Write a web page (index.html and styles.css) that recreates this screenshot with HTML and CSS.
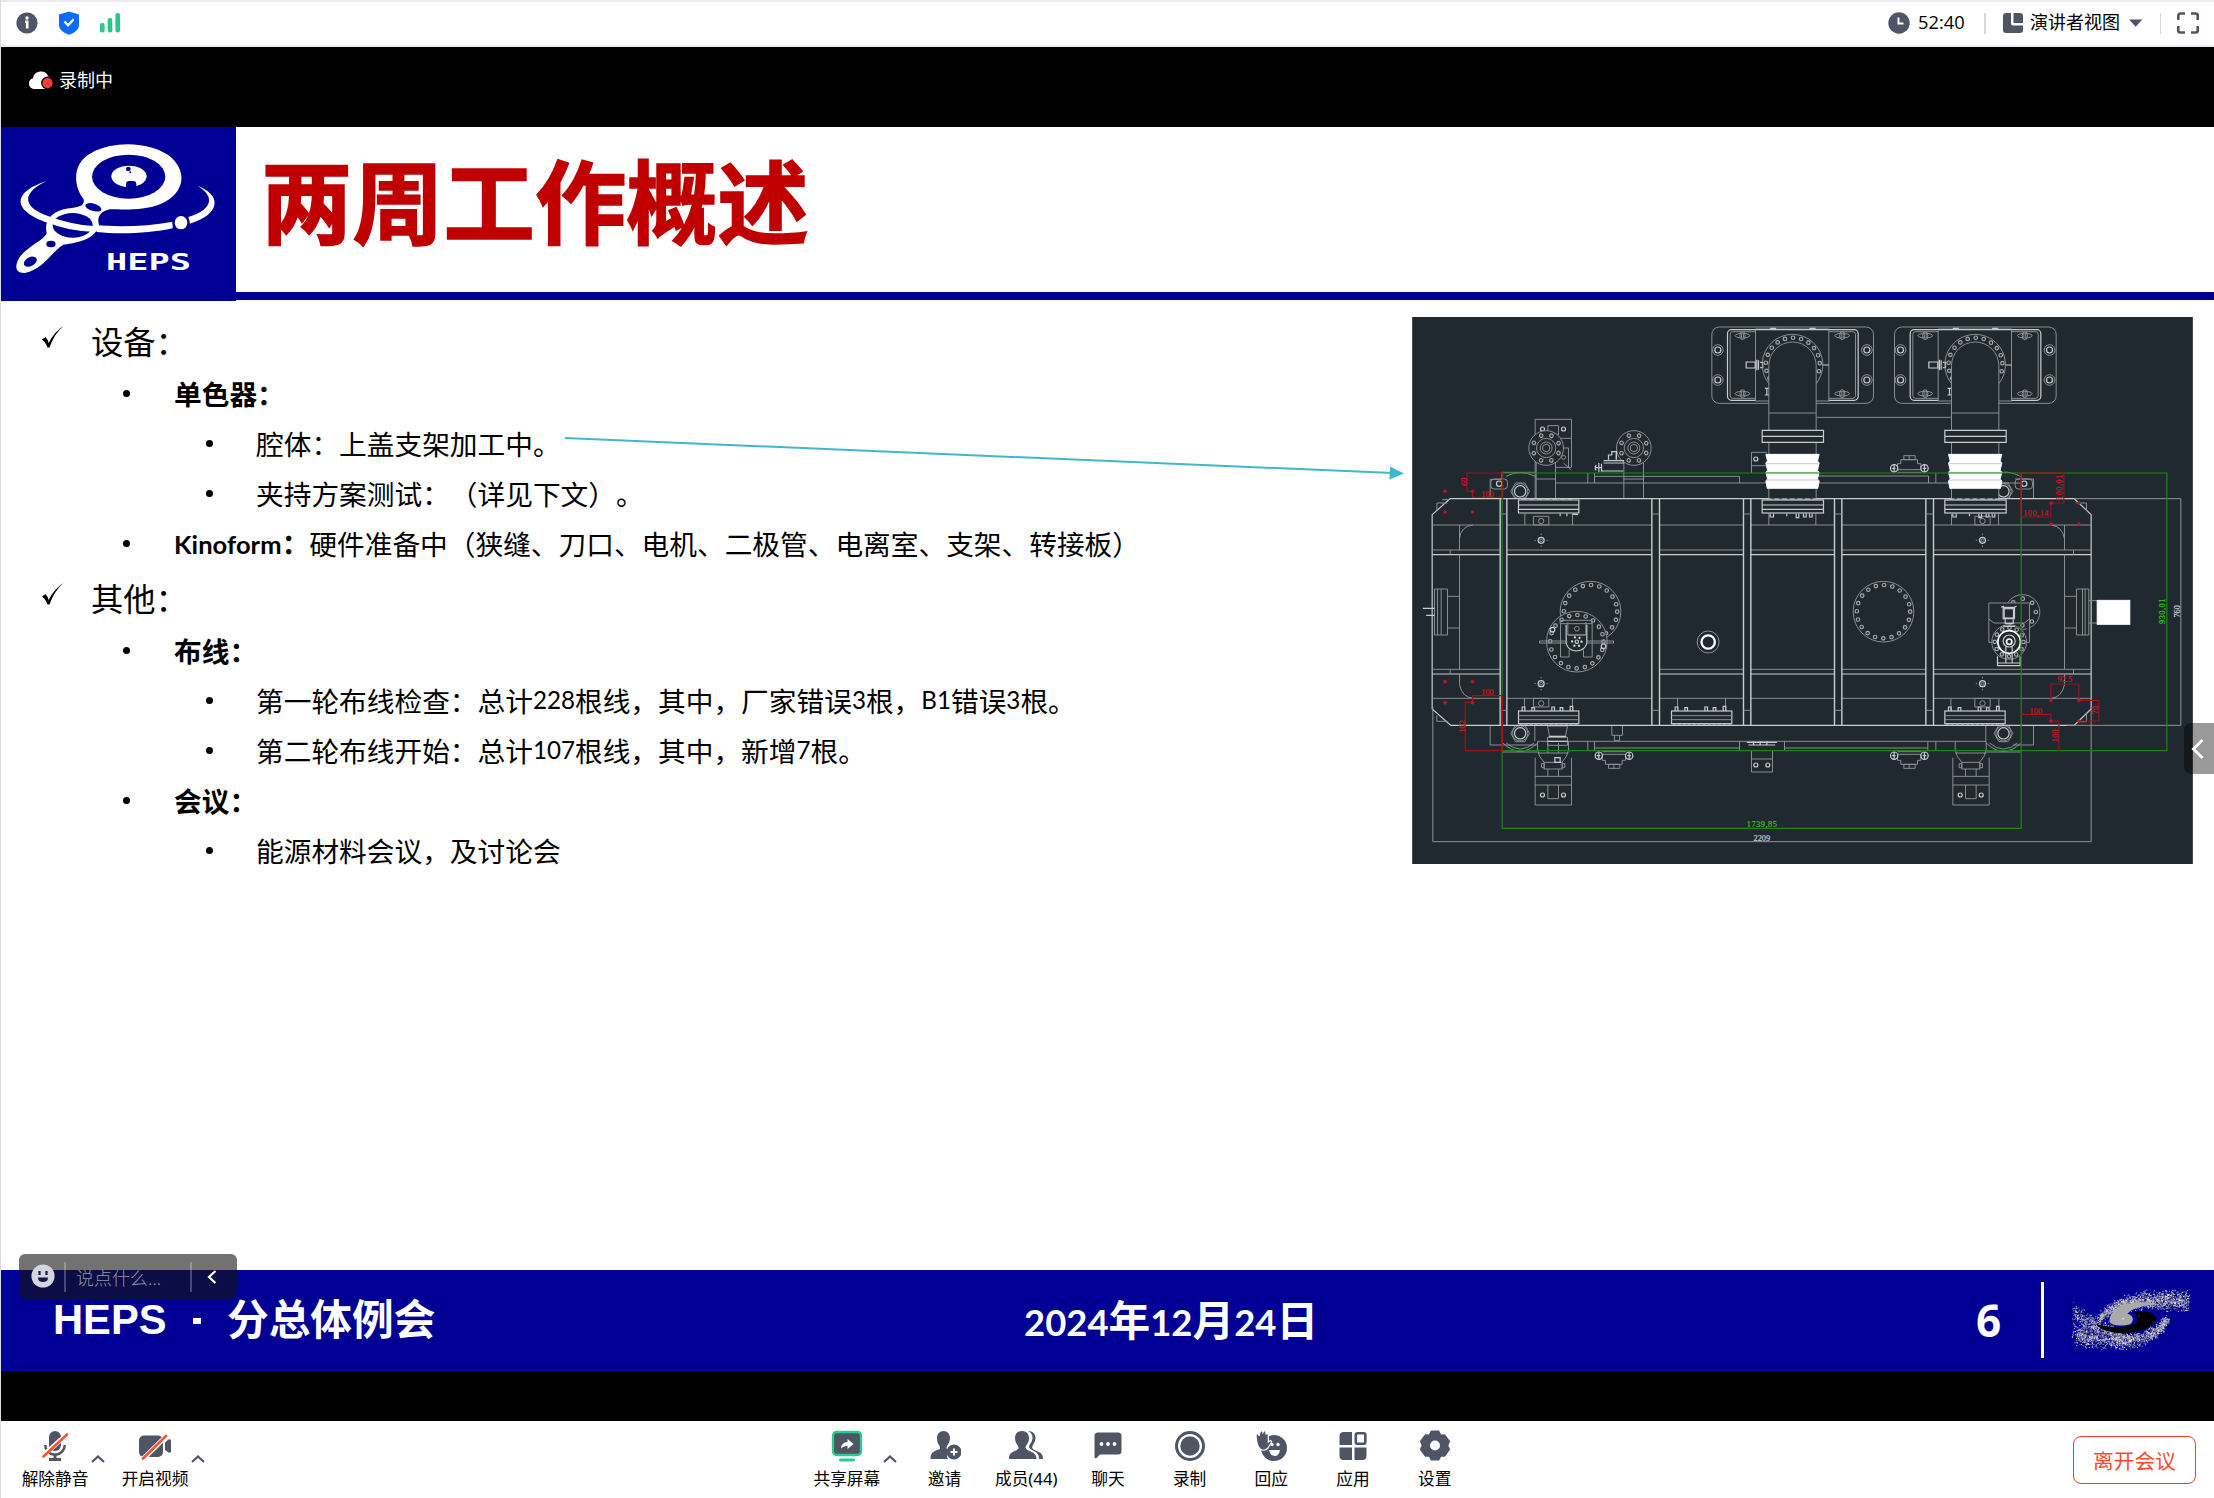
FILE: index.html
```html
<!DOCTYPE html>
<html lang="zh-CN">
<head>
<meta charset="utf-8">
<title>会议</title>
<link rel="stylesheet" href="styles.css">
</head>
<body>
<div class="window">
  <header class="topbar">
    <div class="status">
      <svg class="ico-info" viewBox="0 0 22 22"><circle cx="11" cy="11" r="10.6" fill="#4f5565"/><circle cx="11" cy="6" r="1.700" fill="#fff"/><path d="M9 9.800h2.200v6.600" fill="none" stroke="#fff" stroke-width="2.600"/></svg>
      <svg class="ico-shield" viewBox="0 0 22 24"><path d="M11 .6 21 3.4V14c0 5-5 8-10 9.700C6 22 1 19 1 14V3.400z" fill="#0a6cff"/><path d="m6.500 10.500 3.600 3.800 5.600-6" fill="none" stroke="#fff" stroke-width="2.300"/></svg>
      <svg class="ico-signal" viewBox="0 0 20 20"><g fill="#26c98a"><rect x="0" y="10" width="4.600" height="9.500" rx="2"/><rect x="7.700" y="5" width="4.600" height="14.500" rx="2"/><rect x="15.400" y="0" width="4.600" height="19.500" rx="2"/></g></svg>
    </div>
    <div class="view">
      <svg class="ico-clock" viewBox="0 0 22 22"><circle cx="11" cy="11" r="10.700" fill="#4f5565"/><path d="M10.500 5.600v6h5" fill="none" stroke="#fff" stroke-width="2"/></svg>
      <span class="timer">52:40</span>
      <i class="rule rule-a"></i>
      <svg class="ico-layout" viewBox="0 0 20 20"><path d="M3 0h5v10.500a2 2 0 0 0 2 2h10V17a3 3 0 0 1-3 3H3a3 3 0 0 1-3-3V3a3 3 0 0 1 3-3zM10.500 0H17a3 3 0 0 1 3 3v7h-9.500z" fill="#4f5565"/></svg>
      <span class="viewname">演讲者视图</span>
      <svg class="ico-tri" viewBox="0 0 14 8"><path d="M0 .5h13.400L6.700 7.700z" fill="#4f5565"/></svg>
      <i class="rule rule-b"></i>
      <svg class="ico-full" viewBox="0 0 22 22"><path d="M1.300 8V3.500a2 2 0 0 1 2-2H8M14 1.500h4.700a2 2 0 0 1 2 2V8M20.700 14v4.500a2 2 0 0 1-2 2H14M8 20.500H3.300a2 2 0 0 1-2-2V14" fill="none" stroke="#4f5565" stroke-width="2.600"/></svg>
    </div>
  </header>

  <div class="recbar">
    <svg class="ico-cloud" viewBox="0 0 26 20"><path d="M5.500 19A5.500 5.500 0 0 1 5 8.300 8 8 0 0 1 20.300 6.500 6.500 6.500 0 0 1 25 13l-7 6z" fill="#fff"/><circle cx="19.500" cy="13" r="6.400" fill="#000"/><circle cx="19.500" cy="13.200" r="5.100" fill="#ff3b30"/></svg>
    <span>录制中</span>
  </div>

  <main class="slide">
    <div class="slide-head">
      <svg class="heps" viewBox="3 3 705 522">
        <g fill="#fff">
          <path d="M140 165C20 205 50 262 152 293L160 275C72 250 55 205 140 165z"/>
          <path d="M285 297C350 303 440 302 518 287V307C450 322 360 326 290 318z"/>
          <path d="M592 179C645 210 640 250 565 273L569 293C668 262 662 205 592 179z"/>
        </g>
        <path d="M250 218C220 180 215 110 275 80C350 40 460 50 515 95C565 145 550 205 480 235C430 255 370 250 330 250C300 256 290 275 297 296C290 335 240 350 190 356C160 372 130 430 75 441C40 443 42 410 70 380C105 350 138 335 140 320C130 280 165 250 210 247C245 243 256 235 250 218z" fill="#fff"/>
        <ellipse cx="386" cy="152" rx="110" ry="66" fill="#000094"/>
        <ellipse cx="387" cy="151" rx="53" ry="32" fill="#fff"/>
        <circle cx="385" cy="129" r="7" fill="#000094"/><circle cx="391" cy="139" r="3" fill="#000094"/><path d="M378 183v-10q0-7 8-8h15q8 1 8 8v10z" fill="#000094"/>
        <ellipse cx="218" cy="298" rx="60" ry="37" fill="#000094"/>
        <path d="M150 272q66 24 130 28l5 18q-85-4-140-28z" fill="#fff"/>
        <ellipse cx="280" cy="244" rx="25" ry="11" transform="rotate(16 280 244)" fill="#000094"/>
        <ellipse cx="153" cy="354" rx="14" ry="10" fill="#000094"/>
        <ellipse cx="91" cy="407" rx="21" ry="13" transform="rotate(-28 91 407)" fill="#000094"/>
        <ellipse cx="543" cy="290" rx="26" ry="24" fill="#000094"/><ellipse cx="543" cy="290" rx="19" ry="20" fill="#fff"/>
        <text x="318" y="431" class="heps-word" textLength="255" lengthAdjust="spacingAndGlyphs">HEPS</text>
      </svg>
      <div class="titlebox"><h1>两周工作概述</h1></div>
    </div>

    <div class="slide-body">
      <ul class="outline">
        <li class="l1"><svg class="check" viewBox="0 0 24 24"><path d="M1 14.500 4.500 12q2 2 3.200 6Q13 7 22.500 1q-9.500 8-14 21.500H6.500Q4.500 17 1 14.500z"/></svg>设备：</li>
        <li class="l2"><b>单色器：</b></li>
        <li class="l3">腔体：上盖支架加工中。</li>
        <li class="l3">夹持方案测试：（详见下文）。</li>
        <li class="l2"><b><span class="lat kin">Kinoform</span>：</b>硬件准备中（狭缝、刀口、电机、二极管、电离室、支架、转接板）</li>
        <li class="l1"><svg class="check" viewBox="0 0 24 24"><path d="M1 14.500 4.500 12q2 2 3.200 6Q13 7 22.500 1q-9.500 8-14 21.500H6.500Q4.500 17 1 14.500z"/></svg>其他：</li>
        <li class="l2"><b>布线：</b></li>
        <li class="l3">第一轮布线检查：总计<span class="lat">228</span>根线，其中，厂家错误<span class="lat">3</span>根，<span class="lat">B1</span>错误<span class="lat">3</span>根。</li>
        <li class="l3">第二轮布线开始：总计<span class="lat">107</span>根线，其中，新增<span class="lat">7</span>根。</li>
        <li class="l2"><b>会议：</b></li>
        <li class="l3">能源材料会议，及讨论会</li>
      </ul>

      <svg class="cad" viewBox="36 22 2342 1641">
        <defs>
          <g id="bolt"><circle r="16"/><circle r="9" class="hi"/></g>
          <g id="oval"><ellipse rx="22" ry="7"/><ellipse rx="8" ry="12"/><path d="M-3-6v12M3-6v12"/></g>
          <g id="target"><circle r="9" class="hi"/><circle r="4"/><path d="M-20 0h4M16 0h4M0-20v4M0 16v4"/></g>
          <g id="bolts20"><circle r="80" pathLength="20" class="dots"/><circle r="80" pathLength="20" class="holes"/></g>
          <g id="tower">
            <rect x="935" y="52" width="485" height="229" rx="22"/>
            <rect x="982" y="60" width="392" height="212" rx="12" class="hi"/><rect x="990" y="66" width="376" height="200" rx="8"/>
            <rect x="1066" y="58" width="220" height="216" class="solid"/>
            <path d="M1110 56h18M1228 56h18M1066 60h220" class="hi"/>
            <use href="#bolt" x="953" y="121"/><use href="#bolt" x="953" y="211"/><use href="#bolt" x="1400" y="121"/><use href="#bolt" x="1400" y="211"/>
            <use href="#oval" x="1027" y="78"/><use href="#oval" x="1027" y="252"/><use href="#oval" x="1326" y="78"/><use href="#oval" x="1326" y="252"/>
            <path d="M1038 157h27v18h-27zM1070 150v32M1075 152v28M1080 158h8v16h-8M1268 166h18M1094 236h12M1100 236v20M1094 256h12" class="hi"/>
            <path d="M1106 222A91 91 0 1 1 1248 222"/>
            <g transform="translate(1178 166)"><path d="M-70 40A81 81 0 1 1 70 40" pathLength="14" class="dots"/><path d="M-70 40A81 81 0 1 1 70 40" pathLength="14" class="holes"/></g>
            <path d="M1106 567V168A71 71 0 0 1 1248 168V567" class="solid"/>
            <path d="M1106 310h142"/>
            <path d="M1086 362h184v36h-184zM1086 380h184" class="solid hi"/>
            <path d="M1097 434h160l-5 20 5 6-5 22 5 6-5 20 5 6-4 22h-152l-4-22 5-6-5-20 5-6-5-22 5-6z" fill="#fff" stroke="#fff"/>
            <path d="M1100 462h154M1100 488h154M1100 511h154" stroke="#a9adb0" stroke-width="2"/>
            <rect x="1086" y="571" width="184" height="39" class="solid hi"/>
            <path d="M1086 586h184M1086 599h184M1110 612v10h10v-10M1160 612v8M1188 612v12h8v-12M1210 612v10h8v-10M1228 612v10h8v-10" class="hi"/>
            <path d="M1100 568h156" class="hi" stroke-width="6" stroke-dasharray="14 9"/>
          </g>
          <g id="foot">
            <path d="M405 1344v142h109v-142M405 1400h109M405 1426h109M443 1426v41h32v-41M443 1378v22M475 1378v22"/>
            <circle cx="427" cy="1456" r="6" class="hi"/><circle cx="490" cy="1456" r="6" class="hi"/>
            <rect x="432" y="1358" width="54" height="20"/><path d="M424 1362h8v12h-8zM486 1362h8v12h-8zM412 1295v26q3 20 20 37M505 1295v26q-3 20-20 37M412 1330h93"/>
          </g>
          <g id="elbow"><path d="M443 1300v30M475 1300v30M442 1249h60l-6 30h-48zM442 1283h60v24h-60zM404 1247v48"/><path d="M464 1344h16v14h-16zM446 1281h52M442 1295h60" class="hi"/></g>
          <g id="valve"><path d="M606 1334h70v18h-10v12h-50v-12h-10zM625 1364h34v12h-34zM641 1364v12M606 1326h72" /><circle cx="596" cy="1338" r="11" class="hi"/><circle cx="687" cy="1338" r="11" class="hi"/><path d="M596 1328v20M687 1328v20M600 1338h-10M682 1338h10" class="hi"/></g>
          <g id="nut"><path d="M332 545l14-25h28l14 25-14 25h-28z"/><circle cx="360" cy="545" r="23"/><circle cx="360" cy="545" r="17" class="hi"/></g>
          <g id="flange"><rect x="355" y="1204" width="181" height="38" class="hi"/><path d="M355 1218h181M355 1230h181M373 1166v38M517 1166v38" /><path d="M366 1204v-12h8v12M395 1204v-10h8v10M455 1204v-12h8v12M480 1204v-10h8v10M510 1204v-14h8v14" class="hi"/><path d="M358 1246h176" class="hi" stroke-width="5" stroke-dasharray="10 5"/></g>
        </defs>
        <rect x="36" y="22" width="2342" height="1641" fill="#212930" stroke="none"/>
        <g class="ln">
          <!-- support rails above and below the chamber -->
          <path d="M583 500h435V520M583 490v30M563 490v30M1248 499h337v21M1607 490v30M466 520h1394M1248 323h406M1585 499v21"/>
          <path d="M270 1306V1247M270 1306h140M412 1295h1346M583 1315h435M1153 1315h430M563 1295v28M583 1295v28M1018 1295v28M1153 1295v28M1583 1295v28M1607 1295v28M1757 1247v48M1900 1247v59h-60"/>
          <!-- brackets -->
          <path d="M405 567V329h109v144h-48M443 364v-16h32v30M475 386h39M475 415h30v58M490 460l22 20"/>
          <circle cx="427" cy="358" r="6" class="hi"/><circle cx="490" cy="358" r="6" class="hi"/><circle cx="490" cy="443" r="6"/>
          <path d="M408 456v111M466 456v111M408 508h58M671 456v111M730 456v111M671 508h59M583 500v18"/>
          <g class="solid"><circle cx="438" cy="415" r="52"/><circle cx="701" cy="415" r="52"/></g>
          <g><circle cx="438" cy="415" r="29"/><circle cx="438" cy="415" r="18"/><circle cx="438" cy="415" r="11"/><circle cx="701" cy="415" r="29"/><circle cx="701" cy="415" r="18"/><circle cx="701" cy="415" r="11"/></g>
          <g transform="rotate(22 438 415)"><circle cx="438" cy="415" r="40" pathLength="8" class="dots"/><circle cx="438" cy="415" r="40" pathLength="8" class="holes"/></g>
          <g transform="rotate(22 701 415)"><circle cx="701" cy="415" r="40" pathLength="8" class="dots"/><circle cx="701" cy="415" r="40" pathLength="8" class="holes"/></g>
          <path d="M610 453h62M610 460h62M605 484h64M625 450v-14h10v-10h14v24M648 430v20" class="hi"/><path d="M596 460v28M588 466q-6 8 0 16M604 462v24M586 474h20" class="hi" stroke-width="5"/>
          <path d="M270 567v-58h36M305 509V488h102M318 500q40-22 88 0"/><rect x="272" y="508" width="50" height="30" rx="10"/><circle cx="297" cy="522" r="8" class="hi"/>
          <use href="#nut"/>
          <path d="M1054 490v-62h46M1054 468h46"/><circle cx="1067" cy="448" r="6" class="hi"/>
          <path d="M1804 488q30-4 60 14M1845 508h55v59"/><rect x="1845" y="508" width="52" height="30" rx="10"/><circle cx="1872" cy="522" r="8" class="hi"/>
          <use href="#nut" x="1450"/>
          <g transform="translate(886 1814) scale(1 -1)"><use href="#valve"/></g>
          <use href="#valve"/><use href="#valve" x="886"/>
          <path d="M1054 1323v64h63v-64M1054 1348h63M635 1247v30h32v-30M643 1277v16h15v-16"/><path d="M1040 1298h90M1045 1306h80M1060 1295v12M1080 1295v12M1100 1295v12" class="hi"/>
          <circle cx="1067" cy="1366" r="6" class="hi"/><circle cx="1103" cy="1366" r="6" class="hi"/>
          <use href="#foot"/><use href="#foot" x="1253"/><use href="#elbow"/>
          <use href="#nut" y="726"/><use href="#nut" x="1450" y="726"/>
          <path d="M308 1300q52 50 104 0M308 1327h104M318 1300q42 36 84 0M1758 1300q52 50 104 0M1758 1327h104M1768 1300q42 36 84 0"/>
          <!-- chamber body -->
          <path d="M150 567H2022L2073 615V1198L2022 1247H152L96 1198V615z" class="solid hi"/>
          <path d="M96 646H300M320 646H755M778 646h252M1052 646h251M1325 646h252M1600 646h473M96 721H300M320 721H755M778 721h252M1052 721h251M1325 721h252M1600 721h473"/>
          <path d="M96 735H300M320 735H755M778 735h252M1052 735h251M1325 735h252M1600 735h473M96 1093H300M778 1093h252M1052 1093h251M1325 1093h252M1600 1093h473" class="hi"/>
          <path d="M96 1079H300M778 1079h252M1052 1079h251M1325 1079h252M1600 1079h473M96 1166H300M320 1166H755M778 1166h252M1052 1166h251M1325 1166h252M1600 1166h473"/>
          <path d="M300 567v680M320 567v680M755 567v680M778 567v680M1030 567v680M1052 567v680M1303 567v680M1325 567v680M1577 567v680M1600 567v680" class="hi thick"/>
          <path d="M300 613h20M755 613h23M1030 613h22M1303 613h22M1577 613h23M300 1202h20M755 1202h23M1030 1202h22M1303 1202h22M1577 1202h23"/>
          <path d="M178 646v75M178 735v344M178 1093v32q8 38 40 41M178 685q6-36 40-39M150 721v14M150 1079v14M1993 646v75M1993 735v344M1993 1093v32q-8 38-40 41M1993 688q-6-38-40-42M2020 721v14M2020 1079v14"/>
          <path d="M110 603v-23h30M126 570h18M110 1217v18h32M2059 603v-23h-30M2059 1212v24h-28"/>
          <!-- side ports -->
          <path d="M103 838h39v138h-39zM112 838v138M123 838v138M142 860h36M142 955h36" class="solid"/><path d="M68 896h35M78 917h25" class="hi"/>
          <path d="M2029 838h37v138h-37zM2047 838v138M2055 838v138M1993 860h36M1993 955h36M2066 873h25M2066 940h25"/>
          <rect x="2091" y="872" width="98" height="72" fill="#fff" stroke="#fff"/>
          <!-- flanges -->
          <path d="M355 571h181v39h-181zM355 586h181M355 599h181M480 612v8M500 612v8M515 614h18" class="hi"/><path d="M365 568h150" class="hi" stroke-width="6" stroke-dasharray="14 9"/>
          <path d="M374 612v34M517 612v34M400 620h46v26h-46z"/><circle cx="423" cy="634" r="8"/>
          <path d="M1106 612v34M1247 612v34M1654 612v34M1795 612v34M1724 620h46v26h-46z"/><circle cx="1747" cy="634" r="8"/>
          <use href="#flange"/><use href="#flange" x="459"/><use href="#flange" x="1279"/>
          <path d="M400 1166h46v26h-46zM1724 1166h46v26h-46z"/><circle cx="423" cy="1181" r="8"/><circle cx="1747" cy="1181" r="8"/>
          <use href="#target" x="423" y="692"/><use href="#target" x="1747" y="692"/><use href="#target" x="423" y="1122"/><use href="#target" x="1747" y="1122"/>
          <!-- round ports -->
          <circle cx="571" cy="906" r="91"/><use href="#bolts20" x="571" y="906"/>
          <circle cx="530" cy="996" r="91" class="solid"/><use href="#bolts20" x="530" y="996"/>
          <path d="M480 932h96v10h-96zM481 942v100h26v-22M576 942v100h-26v-22M503 938v38h54v-38M503 976h54" /><path d="M498 945v55q4 22 30 24q28-2 32-24v-55" class="hi"/>
          <circle cx="530" cy="957" r="7"/><circle cx="530" cy="996" r="5" class="hi"/><circle cx="530" cy="996" r="14" pathLength="6" class="spots"/><path d="M418 994h82v6h-82zM560 994h80v6h-80z"/><circle cx="610" cy="1010" r="7" class="hi"/><circle cx="457" cy="960" r="7" class="hi"/>
          <circle cx="1450" cy="906" r="91"/><use href="#bolts20" x="1450" y="906"/>
          <circle cx="924" cy="997" r="33"/><circle cx="924" cy="997" r="20" class="ring"/>
          <circle cx="1867" cy="907" r="52"/><circle cx="1867" cy="907" r="40" pathLength="8" class="dots"/><circle cx="1867" cy="907" r="40" pathLength="8" class="holes"/>
          <path d="M1766 880h122v48l-16 12h-90l-16-12zM1766 928v70h20M1888 928v70h-20" class="solid"/>
          <path d="M1809 893h34v34h-34zM1803 893l8-4M1843 893l6-4M1815 927v14h24v-14" class="hi"/><rect x="1812" y="897" width="28" height="28" class="hi"/>
          <circle cx="1827" cy="997" r="52" class="solid"/><circle cx="1827" cy="997" r="43" pathLength="12" class="dots"/><circle cx="1827" cy="997" r="43" pathLength="12" class="holes"/><circle cx="1827" cy="997" r="34" class="ring thin"/><circle cx="1827" cy="994" r="18" class="hi"/><circle cx="1827" cy="996" r="8" class="ring thin"/>
          <path d="M1817 1010v50M1836 1010v50M1792 1040v28h68v-28M1792 1060h68M1809 950h36" class="hi"/>
        </g>
        <g class="dim"><path d="M2022 567h320v680H2000M98 1190v406h1975v-406"/></g>
        <use href="#tower"/><use href="#tower" x="548"/>
        <g class="green"><path d="M306 490V1556H1863V490M306 490H2300V1323H306"/></g>
        <g class="red">
          <path d="M200 490h108V567M200 490v55h17v18h90M217 1178v-20h90v164M217 1178h-22v145h112M306 1160v163"/>
          <path d="M1862 490h129v90h-38M1862 490v132h90v-42M1952 1172v-49h84v49h60v62h-60M1862 1214h90v20h24v90"/>
          <g class="pts"><circle cx="135" cy="545" r="5.500"/><circle cx="217" cy="545" r="5.500"/><circle cx="135" cy="607" r="5.500"/><circle cx="217" cy="607" r="5.500"/><circle cx="135" cy="1116" r="5.500"/><circle cx="217" cy="1116" r="5.500"/><circle cx="135" cy="1179" r="5.500"/><circle cx="217" cy="1179" r="5.500"/><circle cx="1953" cy="580" r="5.500"/><circle cx="2036" cy="580" r="5.500"/><circle cx="1953" cy="643" r="5.500"/><circle cx="2036" cy="643" r="5.500"/><circle cx="1952" cy="1172" r="5.500"/><circle cx="2036" cy="1172" r="5.500"/><circle cx="1952" cy="1234" r="5.500"/><circle cx="2036" cy="1234" r="5.500"/></g>
        </g>
        <g class="dimtext">
          <text x="262" y="562">100</text><text x="262" y="1156">100</text>
          <text transform="translate(199 516) rotate(-90)">60</text><text transform="translate(193 1250) rotate(-90)">162</text>
          <text x="1907" y="618" textLength="76">100,14</text><text transform="translate(1985 533) rotate(-90)" textLength="76">100,01</text>
          <text x="1994" y="1118">92.5</text><text x="1907" y="1212">100</text>
          <text transform="translate(1973 1278) rotate(-90)">100</text><text transform="translate(2093 1201) rotate(-90)">70</text>
          <text x="1085" y="1552" class="g" textLength="90">1739,85</text><text transform="translate(2294 905) rotate(-90)" class="g" textLength="76">930,01</text>
          <text x="1085" y="1594" class="w">2209</text><text transform="translate(2340 905) rotate(-90)" class="w">760</text>
        </g>
      </svg>
      <svg class="arrow" viewBox="0 0 842 50"><path d="M2 7 830 42" fill="none" stroke="#3fb8cd" stroke-width="2"/><path d="m827 35.500 14 7-14.500 6z" fill="#3fb8cd"/></svg>
    </div>

    <footer class="slide-foot">
      <div class="brand"><span class="arial">HEPS</span><i class="mid"></i><span>分总体例会</span></div>
      <div class="date"><span class="lat">2024</span>年<span class="lat">12</span>月<span class="lat">24</span>日</div>
      <div class="pageno">6</div>
      <i class="bar"></i>
      <svg class="galaxy" id="galaxy" viewBox="510 110 365 195">
        <g id="specks"></g>
        <path d="M588 222C620 230 670 236 705 220C725 208 700 190 706 185C725 178 760 185 769 203C768 225 730 244 680 249C640 250 600 240 588 222z" fill="#000"/>
        <path d="M628 212C630 180 660 160 705 158C735 153 760 157 775 163C740 163 700 170 682 190C700 195 705 210 690 222C665 230 630 225 628 212z" fill="#aaaaaa"/>
        <circle cx="669" cy="205" r="3" fill="#ddd"/><circle cx="717" cy="197" r="3" fill="#333"/>
      </svg>
    </footer>
    <button class="handle"><svg viewBox="0 0 14 22"><path d="M11.500 2 2.500 11l9 9" fill="none" stroke="#fff" stroke-width="2.800"/></svg></button>
    <div class="chatpill">
      <svg class="smile" viewBox="0 0 24 24"><circle cx="12" cy="12" r="11.600" fill="#d4d4e2"/><path d="M8.500 7v4M15.500 7v4" stroke="#17174c" stroke-width="2.200"/><path d="M7 13.500h10q0 4.500-5 4.500t-5-4.500z" fill="#17174c"/></svg>
      <i></i><span>说点什么...</span><i></i>
      <svg class="back" viewBox="0 0 10 14"><path d="M8.500 1 2 7l6.500 6" fill="none" stroke="#fff" stroke-width="2.200"/></svg>
    </div>
  </main>

  <div class="blackgap"></div>

  <nav class="toolbar">
    <div class="tools-left">
      <div class="tool mic"><svg viewBox="0 0 32 32"><g fill="#4f5565"><rect x="10" y="1" width="12" height="20" rx="6"/><path d="M5 15h2.500a8.500 8.500 0 0 0 17 0H27a11 11 0 0 1-9.500 10.800V28H22v3H10v-3h4.500v-2.200A11 11 0 0 1 5 15z"/></g><path d="M3 26.500 29 3.500" stroke="#fff" stroke-width="5"/><path d="M4.500 26.500 28 4.500" stroke="#fb5233" stroke-width="2.600" stroke-linecap="round"/></svg><span>解除静音</span></div>
      <svg class="caret" viewBox="0 0 14 8"><path d="m1 7 6-5.500L13 7"/></svg>
      <div class="tool cam"><svg viewBox="0 0 32 32"><g fill="#4f5565"><rect x="0" y="5.500" width="24" height="21.500" rx="5"/><path d="M26 12.500 29.500 9.500q2.500-1 2.500 1.500v10q0 2.500-2.500 1.500L26 20z"/></g><path d="M3 30 28 5.500" stroke="#fff" stroke-width="5"/><path d="M4 28.500 27 6" stroke="#fb5233" stroke-width="2.600" stroke-linecap="round"/></svg><span>开启视频</span></div>
      <svg class="caret" viewBox="0 0 14 8"><path d="m1 7 6-5.500L13 7"/></svg>
    </div>
    <div class="tools-mid">
      <div class="tool"><svg viewBox="0 0 32 32"><rect x="2" y="2" width="28" height="23" rx="3.500" fill="#4f5565" stroke="#26cf8c" stroke-width="2.300"/><path d="M10 18.500q.5-6.500 6.500-6.500V9l6 5-6 5v-3q-4-.5-6.500 2.500z" fill="#fff"/><rect x="8" y="28.500" width="16" height="3" rx="1.500" fill="#26cf8c"/></svg><span>共享屏幕</span></div>
      <svg class="caret" viewBox="0 0 14 8"><path d="m1 7 6-5.500L13 7"/></svg>
      <div class="tool"><svg viewBox="0 0 32 32"><path d="M14.500 1c4 0 6.500 3 6.500 7 0 3.500-1.500 5.500-3 8-1 2-.5 3 1.500 4A8.500 8.500 0 0 0 19 29H1.500C1.500 23 4 21.500 8.500 20c3-1 3-2 2-4C9 13.500 8 11.500 8 8c0-4 2.500-7 6.500-7z" fill="#4f5565"/><circle cx="25" cy="22" r="7.500" fill="#4f5565"/><path d="M25 18.500v7M21.500 22h7" stroke="#fff" stroke-width="2"/></svg><span>邀请</span></div>
      <div class="tool"><svg class="wide" viewBox="0 0 34 32"><path d="M13 1c4.500 0 7 3 7 7 0 3.500-1.500 5.500-3 8-1 2-.5 3 2.500 4.500 4.500 2 8 3 8 8.500H0c0-5.500 2.500-7 7-8.500 3-1.500 3-2.500 2-4.500-1.500-2.500-3-4.500-3-8 0-4 2.500-7 7-7z" fill="#4f5565"/><path d="M19 1c5 0 7.500 3 7.500 7 0 3.500-2 5.500-3 8-1 2 0 3 3 4.500 5 2 7.500 3 7.500 8.500h-4c0-6-3-7-7-9-3-1.500-3.500-3-2.500-5 1.500-2.500 3-4 3-7.500 0-3-1.500-5-4.500-6.500z" fill="#4f5565"/></svg><span>成员(44)</span></div>
      <div class="tool"><svg viewBox="0 0 32 32"><path d="M6 2.500h20a3.500 3.500 0 0 1 3.500 3.500v15a3.500 3.500 0 0 1-3.500 3.500H8l-3.500 3.500q-2 1-2-1.500V6A3.500 3.500 0 0 1 6 2.500z" fill="#4f5565"/><g fill="#fff"><circle cx="9.500" cy="14" r="1.900"/><circle cx="16" cy="14" r="1.900"/><circle cx="22.500" cy="14" r="1.900"/></g></svg><span>聊天</span></div>
      <div class="tool"><svg viewBox="0 0 32 32"><circle cx="16" cy="16" r="13.500" fill="none" stroke="#4f5565" stroke-width="3"/><circle cx="16" cy="16" r="9.700" fill="#4f5565"/></svg><span>录制</span></div>
      <div class="tool"><svg viewBox="0 0 32 32"><circle cx="19" cy="18" r="13" fill="#4f5565"/><path d="M1 6q0-2 1.500-2T4 6l1-4q.5-1.500 1.700-1.200T8 2.500l.5-1Q9.500.3 10.700 1L11 4q1.500-1 2.300.5V12l2-1.500q2 .5 1 2L13 18q-2.500 3-6 2T2 13z" fill="#4f5565" stroke="#fff" stroke-width="1.200"/><path d="M14 20h11q-1 6-5.500 6T14 20z" fill="#fff"/><circle cx="17" cy="14.500" r="1.700" fill="#fff"/><circle cx="23" cy="14.500" r="1.700" fill="#fff"/></svg><span>回应</span></div>
      <div class="tool"><svg viewBox="0 0 32 32"><g fill="#4f5565"><path d="M6 2h9v13H2.500V6A4 4 0 0 1 6 2zM2.500 17.500H15V30H6a4 4 0 0 1-3.500-4zM17.500 17.500h12V26a4 4 0 0 1-4 4h-8z"/></g><rect x="18.800" y="3.300" width="9.500" height="10.400" rx="1.500" fill="none" stroke="#4f5565" stroke-width="2.600"/></svg><span>应用</span></div>
      <div class="tool"><svg viewBox="0 0 32 32"><path d="M12.500 1.500h7L21.500 5.500l4-.2 4.500 6-1.800 4.200 1.800 4-4.500 6.200-4-.2-2 4h-7l-2-4-4 .2L2 19.500l1.800-4L2 11.300l4.500-6 4 .2z" fill="#4f5565" stroke="#4f5565" stroke-width="2" stroke-linejoin="round"/><circle cx="16" cy="15.500" r="5" fill="#fff"/></svg><span>设置</span></div>
    </div>
    <button class="leave">离开会议</button>
  </nav>
</div>
<script src="galaxy.js"></script>
</body>
</html>
```
FILE: styles.css
```css
* { box-sizing: border-box; }
body { margin: 0; background: #fff; font-family: "Noto Sans", "Noto Sans CJK SC", sans-serif; color: #000; text-spacing-trim: space-all; }
svg { display: block; flex: none; }
button { font: inherit; margin: 0; padding: 0; cursor: pointer; }
.window { width: 2214px; height: 1498px; display: flex; flex-direction: column; border-left: 1px solid #dcdce0; overflow: hidden; }

.topbar { height: 47px; flex: none; display: flex; justify-content: space-between; border-top: 2px solid #ebebf0; border-bottom: 2px solid #ebebf0; font-size: 18px; line-height: 26px; padding-bottom: 1px; }
.status, .view { display: flex; align-items: center; }
.status { padding-left: 15px; }
.ico-info { width: 22px; height: 22px; }
.ico-shield { width: 22px; height: 24px; margin-left: 20px; }
.ico-signal { width: 20px; height: 20px; margin-left: 20px; }
.view { padding-right: 15px; }
.ico-clock { width: 22px; height: 22px; }
.timer { width: 46px; margin: -2px 0 0 8px; font-family: "Open Sans", sans-serif; font-size: 18.300px; }
.rule { width: 2px; height: 21px; background: #d5d7dc; }
.rule-a { margin-left: 20px; }
.ico-layout { width: 20px; height: 20px; margin-left: 17px; }
.viewname { margin: -2px 0 0 7px; width: 90px; white-space: nowrap; }
.ico-tri { width: 14px; height: 8px; margin-left: 9px; }
.rule-b { width: 1px; margin-left: 17px; }
.ico-full { width: 22px; height: 22px; margin-left: 16px; }

.recbar { height: 80px; flex: none; background: #000; color: #fff; display: flex; align-items: flex-start; padding: 21px 0 0 27px; font-size: 18px; line-height: 24px; }
.ico-cloud { width: 26px; height: 20px; margin: 2px 5px 0 0; }

.slide { position: relative; height: 1244px; flex: none; display: flex; flex-direction: column; background: #fff; }
.slide-head { height: 174px; flex: none; display: flex; align-items: flex-start; }
.heps { width: 235px; height: 174px; background: #000094; }
.heps-word { font: bold 68px "DejaVu Sans Mono", monospace; fill: #fff; }
.titlebox { flex: 1; height: 173px; border-bottom: 8px solid #000094; padding-left: 25px; }
h1 { margin: 0; font: bold 91.3px/140px "Noto Sans CJK SC", sans-serif; color: #c00000; -webkit-text-stroke: 1.5px #c00000; }

.slide-body { position: relative; flex: 1; display: flex; justify-content: space-between; align-items: flex-start; }
.outline { list-style: none; margin: 0; padding: 10px 0 0; font: 27.7px/50px "Noto Sans CJK SC", sans-serif; white-space: nowrap; }
.outline li { display: flex; align-items: center; height: 50px; }
.outline .l1 { height: 57px; font-size: 32.3px; padding-left: 40px; }
.check { width: 24px; height: 24px; margin: -6px 26px 0 0; }
.l2::before, .l3::before { content: ""; width: 7px; height: 7px; border-radius: 50%; background: #000; }
.l2::before { margin: 0 44px 0 122px; }
.l3::before { margin: 0 43px 0 205px; }
.lat { font-family: Lato, sans-serif; font-size: .874em; }
.kin { font-size: .92em; letter-spacing: .1px; }
.cad { width: 781px; height: 547px; margin: 16px 21px 0 0; }
.arrow { position: absolute; left: 562px; top: 130px; width: 842px; height: 50px; }

.cad { fill: none; stroke: #8f9599; stroke-width: 2.8; }
.cad .hi { stroke: #c8cccf; stroke-width: 3.6; }
.cad .thick { stroke-width: 4.2; }
.cad .ring { stroke: #fff; stroke-width: 7; }
.cad .thin { stroke-width: 5; }
.cad .solid { fill: #212930; }
.cad .dots { stroke: #a5abae; stroke-width: 14; stroke-linecap: round; stroke-dasharray: 0 1; }
.cad .holes { stroke: #212930; stroke-width: 7; stroke-linecap: round; stroke-dasharray: 0 1; }
.cad .spots { stroke: #d5d8da; stroke-width: 7; stroke-linecap: round; stroke-dasharray: 0 1; }
.cad .dim { stroke: #8f9599; stroke-width: 3; }
.cad .green { stroke: #22821d; stroke-width: 3.6; }
.cad .red { stroke: #a01118; stroke-width: 3.4; }
.cad .pts { fill: #c0141b; stroke: none; }
.dimtext { font: 25px "Liberation Serif", serif; fill: #d0161c; stroke: #d0161c; stroke-width: .6; text-anchor: middle; }
.dimtext .g { fill: #2dc71f; stroke: #2dc71f; }
.dimtext .w { fill: #c8cccf; stroke: #c8cccf; }

.slide-foot { height: 101px; flex: none; background: #000094; color: #fff; display: flex; align-items: center; font: bold 41.7px/60px "Noto Sans CJK SC", sans-serif; white-space: nowrap; padding-bottom: 2px; }
.brand { width: 1023px; padding-left: 52px; display: flex; align-items: center; margin-top: -5px; }
.arial { font: bold 41.700px "Liberation Sans", sans-serif; width: 112px; margin-top: 5px; }
.mid { width: 8px; height: 6px; margin: 7px 26px 0 28px; background: #fff; }
.date { width: 952px; }
.pageno { width: 65px; font: bold 44px "Open Sans", sans-serif; }
.bar { width: 3px; height: 76px; background: #fff; }
.galaxy { width: 121.667px; height: 65px; margin-left: 26px; }

.handle { position: absolute; right: 0; top: 596px; width: 30px; height: 51px; border: 0; border-radius: 7px 0 0 7px; background: rgba(0,0,0,.4); }
.handle svg { width: 14px; height: 22px; margin-left: 7px; }
.chatpill { position: absolute; left: 18px; top: 1127px; width: 218px; height: 45px; border-radius: 6px; background: rgba(20,20,20,.6); color: #9292a8; display: flex; align-items: center; font-size: 18px; font-weight: 300; }
.chatpill i { width: 2px; height: 30px; background: rgba(255,255,255,.25); }
.smile { width: 24px; height: 24px; margin: -1px 9px 0 12px; }
.chatpill span { width: 114px; margin-left: 10px; padding-top: 1px; }
.back { width: 10px; height: 14px; margin-left: 15px; }

.blackgap { height: 50px; flex: none; background: #000; }

.toolbar { height: 77px; flex: none; display: flex; }
.tools-left { width: 805px; display: flex; padding-left: 18px; }
.tools-mid { display: flex; }
.tool { width: 81.7px; display: flex; flex-direction: column; align-items: center; padding-top: 9px; font-size: 16.700px; line-height: 24px; white-space: nowrap; }
.tool svg { width: 32px; height: 32px; margin-bottom: 5px; }
.tool svg.wide { width: 34px; }
.tools-left .tool { width: 72px; }
.tools-left .cam { margin-left: 14px; }
.caret { width: 14px; height: 8px; margin: 34px 0 0; }
.caret path { fill: none; stroke: #4f5565; stroke-width: 2.200; }
.tools-mid > .caret { margin: 34px 7px 0 -5px; }
.leave { width: 123px; height: 48px; margin: 15px 18px 0 auto; border: 1.500px solid #f03e26; border-radius: 8px; background: #fff; color: #fb4a2c; font-size: 20.700px; }
```
FILE: galaxy.js
```js
// Scatter the stars of the galaxy emblem along its two spiral arms.
(function () {
  var seed = 7;
  function rnd() { seed = (seed * 16807) % 2147483647; return seed / 2147483647; }
  function g() { return rnd() + rnd() + rnd() - 1.5; }
  // Each arm: a cubic curve, then its width at the start and end, and its star count.
  var arms = [
    [[598, 205], [640, 150], [740, 140], [866, 145], 12, 32, 1100],
    [[660, 160], [700, 155], [790, 155], [866, 160], 10, 24, 500],
    [[520, 185], [560, 215], [600, 235], [660, 245], 28, 14, 420],
    [[522, 250], [580, 270], [640, 265], [700, 265], 32, 26, 700],
    [[640, 270], [720, 275], [780, 250], [800, 205], 26, 12, 700]
  ];
  var tones = ["#f4f4f8", "#d0d0dc", "#a9a9b4", "#77778c", "#b9b9c4", "#55555c"];
  var out = "";
  arms.forEach(function (a) {
    for (var i = 0; i < a[6]; i++) {
      var t = rnd(), u = 1 - t, w = a[4] * u + a[5] * t;
      function at(k) { return u*u*u*a[0][k] + 3*u*u*t*a[1][k] + 3*u*t*t*a[2][k] + t*t*t*a[3][k]; }
      var x = at(0) + g() * 10, y = at(1) + g() * w;
      if (x > 868 || x < 513 || y < 117 || y > 297) continue;
      out += '<rect x="' + x.toFixed(1) + '" y="' + y.toFixed(1) + '" width="3" height="3" fill="' + tones[Math.floor(rnd() * 6)] + '"/>';
    }
  });
  document.getElementById("specks").innerHTML = out;
})();
```
